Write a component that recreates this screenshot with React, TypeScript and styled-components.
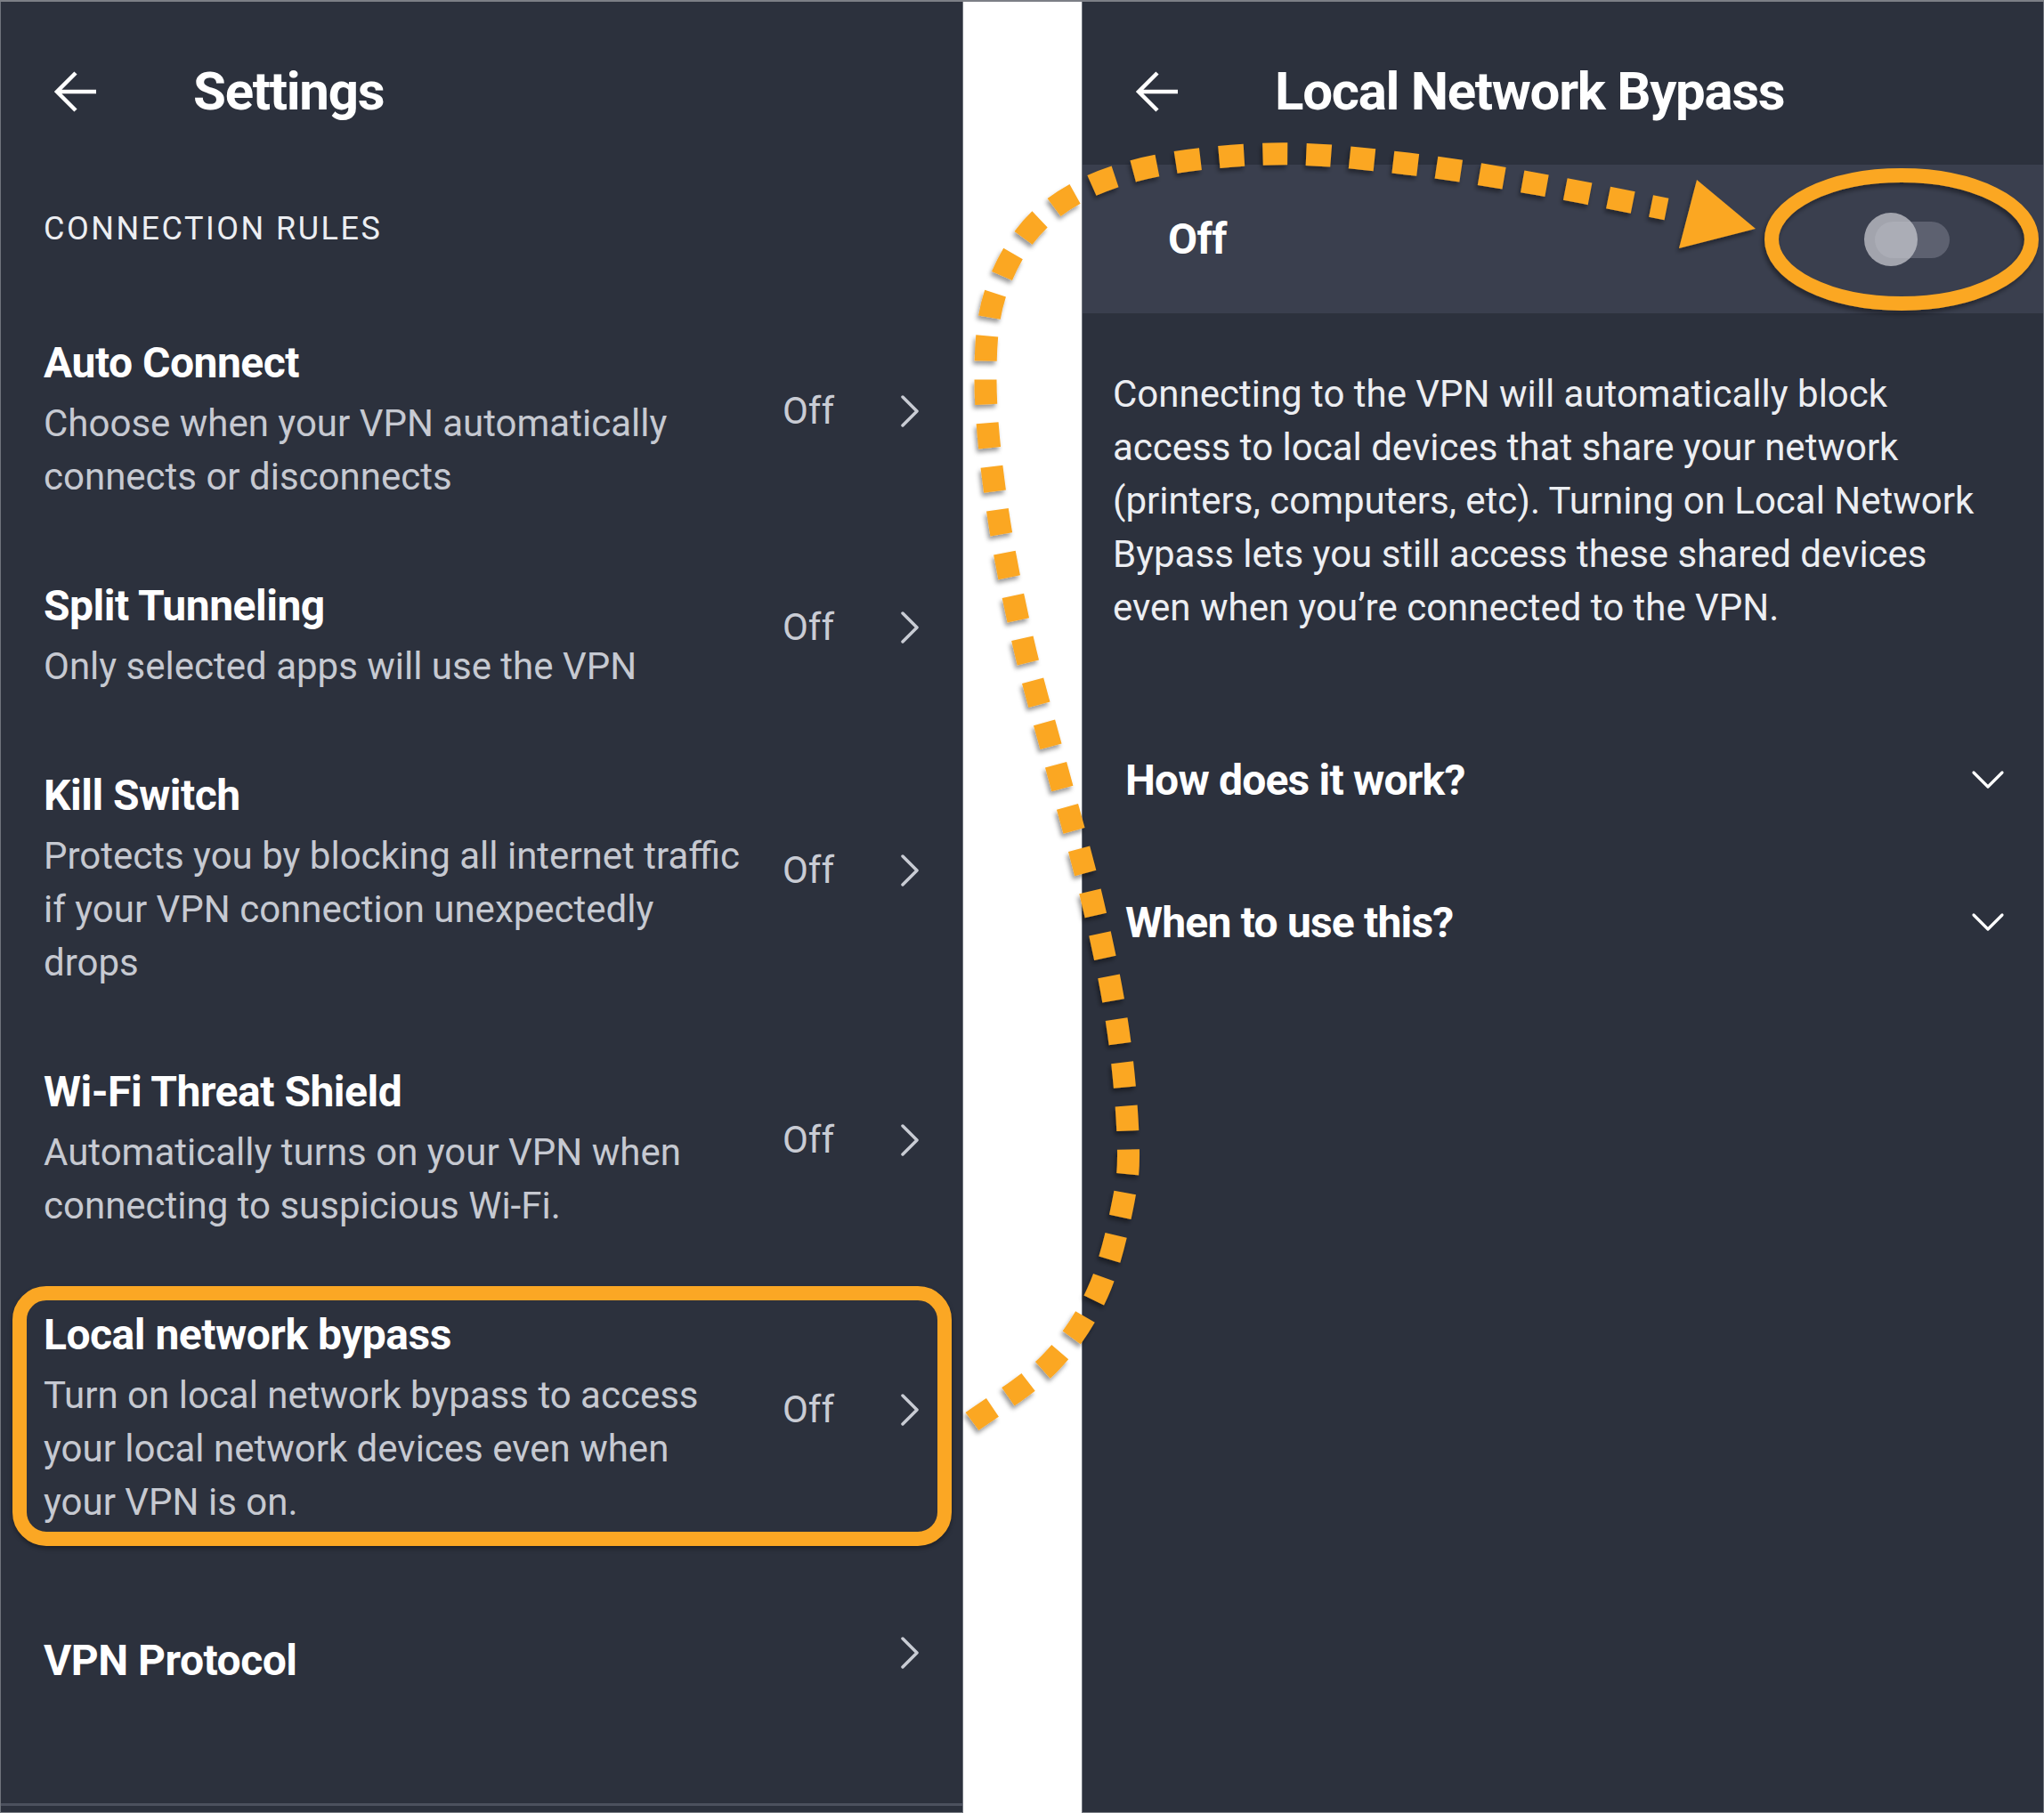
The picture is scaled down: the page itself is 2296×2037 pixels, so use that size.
import React from 'react';
import styled, { createGlobalStyle } from 'styled-components';

const ORANGE = '#fba724';

const GlobalStyle = createGlobalStyle`
  html, body {
    margin: 0;
    padding: 0;
    background: #ffffff;
  }
  body {
    font-family: Roboto, 'Noto Sans', 'Liberation Sans', sans-serif;
    -webkit-font-smoothing: antialiased;
  }
`;

type Rule = {
  title: string;
  desc?: string;
  value?: string;
  highlight?: boolean;
};

const rules: Rule[] = [
  { title: 'Auto Connect', desc: 'Choose when your VPN automatically connects or disconnects', value: 'Off' },
  { title: 'Split Tunneling', desc: 'Only selected apps will use the VPN', value: 'Off' },
  {
    title: 'Kill Switch',
    desc: 'Protects you by blocking all internet traffic if your VPN connection unexpectedly drops',
    value: 'Off',
  },
  { title: 'Wi-Fi Threat Shield', desc: 'Automatically turns on your VPN when connecting to suspicious Wi-Fi.', value: 'Off' },
  {
    title: 'Local network bypass',
    desc: 'Turn on local network bypass to access your local network devices even when your VPN is on.',
    value: 'Off',
    highlight: true,
  },
  { title: 'VPN Protocol' },
];

// points of the hand drawn dotted annotation (page coordinates)
const trail: [number, number][] = [
  [1092, 1595],
  [1179, 1530],
  [1233, 1450],
  [1262, 1347],
  [1267, 1274],
  [1255, 1149],
  [1227, 1010],
  [1186, 857],
  [1149, 718],
  [1120, 568],
  [1107, 425],
  [1120, 322],
  [1174, 239],
  [1274, 190],
  [1428, 171],
  [1581, 182],
  [1728, 205],
  [1872, 233],
];

const smoothPath = (pts: [number, number][]) => {
  let d = `M${pts[0][0]},${pts[0][1]}`;
  for (let i = 0; i < pts.length - 1; i++) {
    const p0 = pts[i - 1] || pts[i];
    const p1 = pts[i];
    const p2 = pts[i + 1];
    const p3 = pts[i + 2] || p2;
    const c1x = p1[0] + (p2[0] - p0[0]) / 6;
    const c1y = p1[1] + (p2[1] - p0[1]) / 6;
    const c2x = p2[0] - (p3[0] - p1[0]) / 6;
    const c2y = p2[1] - (p3[1] - p1[1]) / 6;
    d += ` C${c1x.toFixed(1)},${c1y.toFixed(1)} ${c2x.toFixed(1)},${c2y.toFixed(1)} ${p2[0]},${p2[1]}`;
  }
  return d;
};

const BackIcon = () => (
  <svg width="50" height="48" viewBox="0 0 50 48" fill="none">
    <path d="M48 24 H4 M25 3 L4 24 L25 45" stroke="#ffffff" strokeWidth="4.5" strokeLinejoin="miter" />
  </svg>
);

const ChevronRight = () => (
  <svg width="22" height="38" viewBox="0 0 22 38" fill="none">
    <path d="M3 3 L19 19 L3 35" stroke="#c9ccd4" strokeWidth="3.5" strokeLinecap="round" strokeLinejoin="round" />
  </svg>
);

const ChevronDown = () => (
  <svg width="38" height="24" viewBox="0 0 38 24" fill="none">
    <path d="M3 4 L19 20 L35 4" stroke="#ffffff" strokeWidth="3.2" strokeLinecap="round" strokeLinejoin="round" />
  </svg>
);

const App: React.FC = () => {
  return (
    <Page>
      <GlobalStyle />
      <Panel>
        <Header>
          <BackIcon />
          <HeaderTitle>Settings</HeaderTitle>
        </Header>
        <SectionLabel>CONNECTION RULES</SectionLabel>
        {rules.map((rule) => (
          <Row key={rule.title} $bare={!rule.desc}>
            {rule.highlight && <Highlight />}
            <TextCol>
              <RowTitle $bare={!rule.desc}>{rule.title}</RowTitle>
              {rule.desc && <RowDesc>{rule.desc}</RowDesc>}
            </TextCol>
            <Trailing>
              {rule.value && <Value>{rule.value}</Value>}
              <ChevronRight />
            </Trailing>
          </Row>
        ))}
        <BottomRule />
      </Panel>

      <Gap />

      <Panel>
        <Header>
          <BackIcon />
          <HeaderTitle>Local Network Bypass</HeaderTitle>
        </Header>
        <ToggleBand>
          <BandLabel>Off</BandLabel>
          <Switch>
            <Track />
            <Thumb />
          </Switch>
        </ToggleBand>
        <Description>
          Connecting to the VPN will automatically block access to local devices that share your network (printers,
          computers, etc). Turning on Local Network Bypass lets you still access these shared devices even when
          you’re connected to the VPN.
        </Description>
        <Accordion>
          <AccordionRow>
            <AccordionTitle>How does it work?</AccordionTitle>
            <ChevronDown />
          </AccordionRow>
          <AccordionRow>
            <AccordionTitle>When to use this?</AccordionTitle>
            <ChevronDown />
          </AccordionRow>
        </Accordion>
      </Panel>

      <Overlay width="2296" height="2037" viewBox="0 0 2296 2037">
        <defs>
          <filter id="dropShadow" x="-10%" y="-10%" width="120%" height="120%">
            <feDropShadow dx="-2" dy="4" stdDeviation="2.5" floodColor="#000" floodOpacity="0.4" />
          </filter>
        </defs>
        <g filter="url(#dropShadow)">
          <path
            d={smoothPath(trail)}
            fill="none"
            stroke={ORANGE}
            strokeWidth="25"
            strokeDasharray="28 21"
          />
          <polygon points="1906,200 1972,255 1886,277" fill={ORANGE} />
          <ellipse cx="2136" cy="267" rx="146" ry="72" fill="none" stroke={ORANGE} strokeWidth="16" />
        </g>
      </Overlay>
    </Page>
  );
};

export default App;

const Page = styled.div`
  position: relative;
  width: 2296px;
  height: 2037px;
  display: grid;
  grid-template-columns: 1082px 133px 1081px;
  border-top: 2px solid #7c7f86;
  box-sizing: border-box;
  overflow: hidden;
`;

const Panel = styled.div`
  display: flex;
  flex-direction: column;
  background: #2c313d;
  border-left: 1px solid #6f737c;
  border-right: 1px solid #6f737c;
  border-bottom: 1px solid #7c7f86;
  box-sizing: border-box;
  min-width: 0;
`;

const Gap = styled.div`
  background: #ffffff;
`;

const Header = styled.div`
  height: 183px;
  display: flex;
  align-items: center;
  padding: 19px 0 0 59px;
  box-sizing: border-box;
  gap: 107px;
  flex-shrink: 0;
`;

const HeaderTitle = styled.h1`
  margin: 0;
  font-size: 60px;
  line-height: 70px;
  font-weight: 700;
  letter-spacing: -1.3px;
  color: #ffffff;
`;

const SectionLabel = styled.div`
  margin: 47px 0 52px 48px;
  font-size: 36px;
  line-height: 50px;
  letter-spacing: 2.5px;
  color: #eceef2;
`;

const Row = styled.div<{ $bare?: boolean }>`
  position: relative;
  display: flex;
  align-items: center;
  min-height: ${(p) => (p.$bare ? '214px' : '0')};
  padding: ${(p) => (p.$bare ? '0' : '41.5px')} 48px ${(p) => (p.$bare ? '0' : '41.5px')} 48px;
  box-sizing: border-box;
`;

const Highlight = styled.div`
  position: absolute;
  top: 19px;
  bottom: 22px;
  left: 13px;
  right: 12px;
  border: 16px solid ${ORANGE};
  border-radius: 38px;
  box-shadow: 0 3px 5px rgba(0, 0, 0, 0.35);
  pointer-events: none;
`;

const TextCol = styled.div`
  flex: 0 0 792px;
`;

const RowTitle = styled.div<{ $bare?: boolean }>`
  font-size: 48px;
  line-height: 64px;
  font-weight: 700;
  letter-spacing: -0.5px;
  color: #ffffff;
  margin-bottom: ${(p) => (p.$bare ? '0' : '6px')};
`;

const RowDesc = styled.div`
  font-size: 42px;
  line-height: 60px;
  color: #c6c9d1;
`;

const Trailing = styled.div`
  margin-left: auto;
  margin-bottom: 18px;
  display: flex;
  align-items: center;
  gap: 74px;
`;

const Value = styled.span`
  font-size: 42px;
  line-height: 60px;
  color: #c9ccd4;
`;

const BottomRule = styled.div`
  margin-top: auto;
  margin-bottom: 7px;
  height: 3px;
  background: #4c515e;
`;

const ToggleBand = styled.div`
  height: 167px;
  flex-shrink: 0;
  display: flex;
  align-items: center;
  justify-content: space-between;
  padding: 0 105px 0 96px;
  background: #3a3f4e;
`;

const BandLabel = styled.span`
  font-size: 48px;
  font-weight: 700;
  letter-spacing: -0.5px;
  color: #ffffff;
`;

const Switch = styled.div`
  position: relative;
  width: 96px;
  height: 60px;
`;

const Track = styled.div`
  position: absolute;
  right: 0;
  top: 10px;
  width: 84px;
  height: 41px;
  border-radius: 21px;
  background: #5d6170;
`;

const Thumb = styled.div`
  position: absolute;
  left: 0;
  top: 0;
  width: 60px;
  height: 60px;
  border-radius: 50%;
  background: rgba(198, 200, 206, 0.74);
`;

const Description = styled.p`
  margin: 61px 0 0 34px;
  width: 988px;
  font-size: 42px;
  line-height: 60px;
  color: #eceef2;
`;

const Accordion = styled.div`
  margin-top: 83px;
  display: flex;
  flex-direction: column;
`;

const AccordionRow = styled.div`
  height: 160px;
  display: flex;
  align-items: center;
  justify-content: space-between;
  padding: 0 43px 0 48px;
`;

const AccordionTitle = styled.span`
  font-size: 48px;
  font-weight: 700;
  letter-spacing: -0.8px;
  color: #ffffff;
`;

const Overlay = styled.svg`
  position: absolute;
  left: 0;
  top: 0;
  pointer-events: none;
  z-index: 2;
`;
